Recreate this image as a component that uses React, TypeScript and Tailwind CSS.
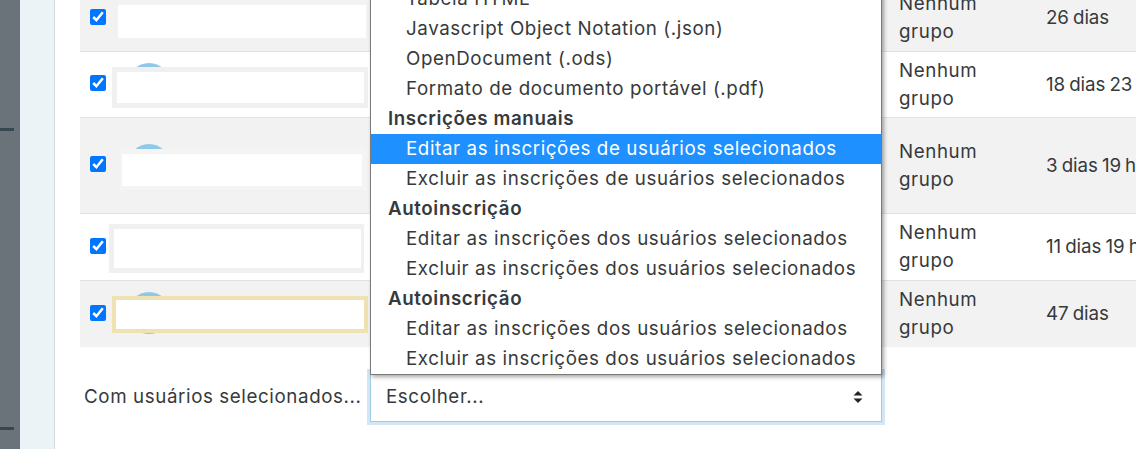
import React from "react";

interface Row {
  h: string;
  border: boolean;
  bg: string;
  avatar: string | null;
  box: string;
  group: string;
  time: string;
}

const rows: Row[] = [
  {
    h: "h-[67px]",
    border: true,
    bg: "bg-[#f2f2f2]",
    avatar: null,
    box: "left-[8px] top-[20px] w-[248px] h-[33px] bg-white",
    group: "Nenhum grupo",
    time: "26 dias",
  },
  {
    h: "h-[66px]",
    border: true,
    bg: "bg-white",
    avatar: "left-[18px] top-[11px]",
    box: "left-[2px] top-[15px] w-[256px] h-[41px] bg-white border-[5px] border-r-4 border-[#f0f0f0]",
    group: "Nenhum grupo",
    time: "18 dias 23 horas",
  },
  {
    h: "h-[96px]",
    border: true,
    bg: "bg-[#f2f2f2]",
    avatar: "left-[18px] top-[26px]",
    box: "left-[10px] top-[31px] w-[247px] h-[41px] bg-white border-l-2 border-t-[5px] border-r-[5px] border-b-4 border-[#f4f4f4]",
    group: "Nenhum grupo",
    time: "3 dias 19 horas",
  },
  {
    h: "h-[67px]",
    border: true,
    bg: "bg-white",
    avatar: null,
    box: "-left-[1px] top-[10px] w-[255px] h-[49px] bg-white border-[5px] border-r-[3px] border-[#f0f0f0]",
    group: "Nenhum grupo",
    time: "11 dias 19 horas",
  },
  {
    h: "h-[66px]",
    border: false,
    bg: "bg-[#f2f2f2]",
    avatar: "left-[18px] top-[11px]",
    box: "left-[2px] top-[15px] w-[256px] h-[37px] bg-white border-4 border-[#eee2b2]",
    group: "Nenhum grupo",
    time: "47 dias",
  },
];

type Opt = { label: string; header?: boolean; active?: boolean };

const options: Opt[] = [
  { label: "Tabela HTML" },
  { label: "Javascript Object Notation (.json)" },
  { label: "OpenDocument (.ods)" },
  { label: "Formato de documento portável (.pdf)" },
  { label: "Inscrições manuais", header: true },
  { label: "Editar as inscrições de usuários selecionados", active: true },
  { label: "Excluir as inscrições de usuários selecionados" },
  { label: "Autoinscrição", header: true },
  { label: "Editar as inscrições dos usuários selecionados" },
  { label: "Excluir as inscrições dos usuários selecionados" },
  { label: "Autoinscrição", header: true },
  { label: "Editar as inscrições dos usuários selecionados" },
  { label: "Excluir as inscrições dos usuários selecionados" },
];

const SortArrows = () => (
  <svg width="10" height="14" viewBox="0 0 10 14" className="text-[#212529]">
    <path d="M5 1 L9.5 5.5 H0.5 Z" fill="currentColor" />
    <path d="M5 13 L9.5 8.5 H0.5 Z" fill="currentColor" />
  </svg>
);

const App = () => {
  return (
    <div
      className="relative w-[1136px] h-[449px] overflow-hidden bg-white flex text-[#373a3c] text-[18.75px] leading-[28px] tracking-[0.6px]"
      style={{ fontFamily: "Inter, 'Open Sans', sans-serif" }}
    >
      {/* drawer strip */}
      <div className="w-[20px] shrink-0 bg-[#6b737a] flex flex-col">
        <div className="mt-[128px] w-[14px] h-[3px] bg-[#37474f]" />
        <div className="mt-[296px] w-[14px] h-[3px] bg-[#37474f]" />
      </div>
      <div className="w-[35px] shrink-0 bg-[#ebf3f6] border-r border-[#d3dce1]" />

      {/* main */}
      <div className="flex-1 pl-[25px]">
        <div className="-mt-[15px] w-[1100px]">
          {rows.map((r, i) => (
            <div
              key={i}
              className={`flex ${r.h} ${r.bg} ${r.border ? "border-b border-[#dee2e6]" : ""}`}
            >
              <div className="w-[30px] shrink-0 flex items-center pl-[10px] -mt-[3px]">
                <input
                  type="checkbox"
                  checked
                  readOnly
                  className="w-4 h-4 m-0 accent-[#0075ff]"
                />
              </div>
              <div className="relative w-[776px] shrink-0">
                {r.avatar && (
                  <div className={`absolute ${r.avatar} w-[42px] h-[42px] rounded-full bg-[#8ecae8]`} />
                )}
                <div className={`absolute ${r.box}`} />
              </div>
              <div className="w-[148px] shrink-0 flex items-center pl-[13px]">
                <span className="w-[90px]">{r.group}</span>
              </div>
              <div className="flex items-center pl-[12px] whitespace-nowrap tracking-[-0.1px] [word-spacing:-1px]">
                {r.time}
              </div>
            </div>
          ))}
        </div>

        <div className="flex items-center mt-[25px]">
          <label className="w-[290px] pl-[4px] whitespace-nowrap">Com usuários selecionados...</label>
          <div className="w-[512px] h-[50px] border border-[#9fcbe6] ring-[3px] ring-[#d2e6f3] bg-white flex items-center justify-between pl-[15px] pr-[18px]">
            <span>Escolher...</span>
            <SortArrows />
          </div>
        </div>
      </div>

      {/* open select list */}
      <div className="absolute left-[370px] top-[-17px] w-[512px] bg-white border border-[#7a7a7a] shadow-[2px_2px_4px_rgba(0,0,0,0.35)] z-10">
        {options.map((o, i) => (
          <div
            key={i}
            className={`h-[30px] leading-[30px] whitespace-nowrap ${
              o.header ? "pl-[17px] font-semibold" : "pl-[35px]"
            } ${o.active ? "bg-[#1e90ff] text-white" : ""}`}
          >
            {o.label}
          </div>
        ))}
      </div>
    </div>
  );
};

export default App;
